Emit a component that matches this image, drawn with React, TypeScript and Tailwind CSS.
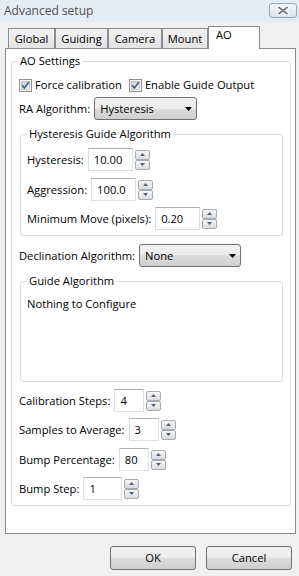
import React from 'react'

// Win7-ish "Advanced setup" dialog, AO tab

const btnGrad =
  'bg-[linear-gradient(to_bottom,#f2f2f2_0%,#ebebeb_50%,#dddddd_50%,#cfcfcf_100%)]'

function Checkbox() {
  return (
    <svg width="13" height="13" viewBox="0 0 13 13" className="shrink-0">
      <defs>
        <linearGradient id="cbfill" x1="0" y1="0" x2="1" y2="1">
          <stop offset="0" stopColor="#c9cdd4" />
          <stop offset="1" stopColor="#f8f8f8" />
        </linearGradient>
      </defs>
      <rect x="0.5" y="0.5" width="12" height="12" fill="#f6f6f6" stroke="#8e8f8f" />
      <rect x="2.5" y="2.5" width="8" height="8" fill="url(#cbfill)" stroke="#b5bac2" strokeWidth="0.7" />
      <path d="M3.2 6.3 L5.4 8.9 L9.8 3.2" fill="none" stroke="#3b55a2" strokeWidth="1.6" />
    </svg>
  )
}

function Select({ value, width }: { value: string; width: string }) {
  return (
    <div
      className={`${width} h-[23px] flex items-center justify-between pl-[5px] pr-[4px] border border-[#707070] rounded-[3px] ${btnGrad}`}
    >
      <span>{value}</span>
      <svg width="7" height="4" viewBox="0 0 7 4">
        <path d="M0 0h7L3.5 4z" fill="#000" />
      </svg>
    </div>
  )
}

function SpinBtn({ up }: { up: boolean }) {
  return (
    <div className="w-[15px] h-[10px] border border-[#a6abb3] rounded-[2px] bg-[linear-gradient(to_bottom,#f6f6f6,#dcdcdc)] flex items-center justify-center">
      <svg width="5" height="3" viewBox="0 0 5 3">
        {up ? <path d="M0 3h5L2.5 0z" fill="#4d6185" /> : <path d="M0 0h5L2.5 3z" fill="#4d6185" />}
      </svg>
    </div>
  )
}

function SpinField({
  label,
  value,
  inputW,
  className = '',
}: {
  label: string
  value: string
  inputW: string
  className?: string
}) {
  return (
    <div className={`flex items-center ${className}`}>
      <span>{label}</span>
      <div
        className={`${inputW} h-[23px] ml-[4px] flex items-center pl-[5px] bg-white border border-[#dbdfe6] border-t-[#abadb3]`}
      >
        {value}
      </div>
      <div className="ml-[2px] flex flex-col">
        <SpinBtn up />
        <SpinBtn up={false} />
      </div>
    </div>
  )
}

function GroupBox({
  title,
  className = '',
  children,
}: {
  title: string
  className?: string
  children: React.ReactNode
}) {
  return (
    <div className={`relative border border-[#d5dfe5] rounded-[3px] ${className}`}>
      <span className="absolute -top-[9px] left-[6px] bg-white px-[2px]">{title}</span>
      {children}
    </div>
  )
}

function Tab({ w, children }: { w: string; children: React.ReactNode }) {
  return (
    <div
      className={`${w} h-[20px] flex items-center justify-center border border-b-0 border-[#898c95] bg-[linear-gradient(to_bottom,#f2f2f2,#e3e3e3)]`}
    >
      {children}
    </div>
  )
}

export default function App() {
  return (
    <div className="w-[299px] h-[576px] bg-[#f0f0f0] flex flex-col text-[11.2px] leading-[16px] text-black [font-family:'Open_Sans',sans-serif]">
      {/* Title bar */}
      <div className="h-[22px] shrink-0 bg-[#e6ecf4] flex items-start justify-between">
        <span className="ml-[4px] mt-[3px] text-[12px] text-[#4f4f4f]">Advanced setup</span>
        <div className="mt-[3px] mr-[2px] w-[28px] h-[15px] border border-[#9aa6b6] rounded-[3px] bg-[linear-gradient(to_bottom,#f4f6f9,#dfe4ea)] flex items-center justify-center">
          <svg width="12" height="9" viewBox="0 0 12 9">
            <path d="M2 1.5 L10 7.5 M10 1.5 L2 7.5" stroke="#ffffff" strokeWidth="3.6" strokeLinecap="round" />
            <path d="M2 1.5 L10 7.5 M10 1.5 L2 7.5" stroke="#737b88" strokeWidth="2" strokeLinecap="round" />
          </svg>
        </div>
      </div>

      {/* Tabs */}
      <div className="mt-[4px] ml-[8px] h-[22px] shrink-0 flex items-end relative z-10">
        <Tab w="w-[47px]">Global</Tab>
        <Tab w="w-[53px]">Guiding</Tab>
        <Tab w="w-[54px]">Camera</Tab>
        <Tab w="w-[46px]">Mount</Tab>
        <div className="w-[52px] h-[23px] -mb-px bg-white border border-b-0 border-[#898c95] pl-[7px]">
          AO
        </div>
      </div>

      {/* Panel */}
      <div className="ml-[5px] w-[291px] h-[486px] shrink-0 bg-white border border-[#898c95] pt-[12px] pl-[5px]">
        <GroupBox title="AO Settings" className="w-[280px] pl-[7px] pb-[5px]">
          <div className="mt-[15px] flex items-center h-[16px]">
            <Checkbox />
            <span className="ml-[3px]">Force calibration</span>
            <span className="ml-[7px] flex items-center">
              <Checkbox />
              <span className="ml-[3px]">Enable Guide Output</span>
            </span>
          </div>

          <div className="mt-[4px] flex items-center">
            <span>RA Algorithm:</span>
            <div className="ml-[4px]">
              <Select value="Hysteresis" width="w-[103px]" />
            </div>
          </div>

          <GroupBox title="Hysteresis Guide Algorithm" className="mt-[14px] ml-[1px] w-[263px] pl-[6px] pb-[5px]">
            <SpinField className="mt-[13px]" label="Hysteresis:" value="10.00" inputW="w-[45px]" />
            <SpinField className="mt-[7px]" label="Aggression:" value="100.0" inputW="w-[45px]" />
            <SpinField className="mt-[6px]" label="Minimum Move (pixels):" value="0.20" inputW="w-[45px]" />
          </GroupBox>

          <div className="mt-[8px] flex items-center">
            <span>Declination Algorithm:</span>
            <div className="ml-[4px]">
              <Select value="None" width="w-[102px]" />
            </div>
          </div>

          <GroupBox title="Guide Algorithm" className="mt-[14px] ml-[1px] w-[263px] h-[101px] pl-[6px] pt-[14px]">
            <div>Nothing to Configure</div>
          </GroupBox>

          <SpinField className="mt-[7px]" label="Calibration Steps:" value="4" inputW="w-[30px]" />
          <SpinField className="mt-[6px]" label="Samples to Average:" value="3" inputW="w-[30px]" />
          <SpinField className="mt-[7px]" label="Bump Percentage:" value="80" inputW="w-[30px]" />
          <SpinField className="mt-[6px]" label="Bump Step:" value="1" inputW="w-[39px]" />
        </GroupBox>
      </div>

      {/* Buttons */}
      <div className="mt-[12px] pr-[7px] flex justify-end gap-[10px]">
        <button className={`w-[86px] h-[24px] border border-[#707070] rounded-[3px] ${btnGrad}`}>OK</button>
        <button className={`w-[86px] h-[24px] border border-[#707070] rounded-[3px] ${btnGrad}`}>Cancel</button>
      </div>
    </div>
  )
}
